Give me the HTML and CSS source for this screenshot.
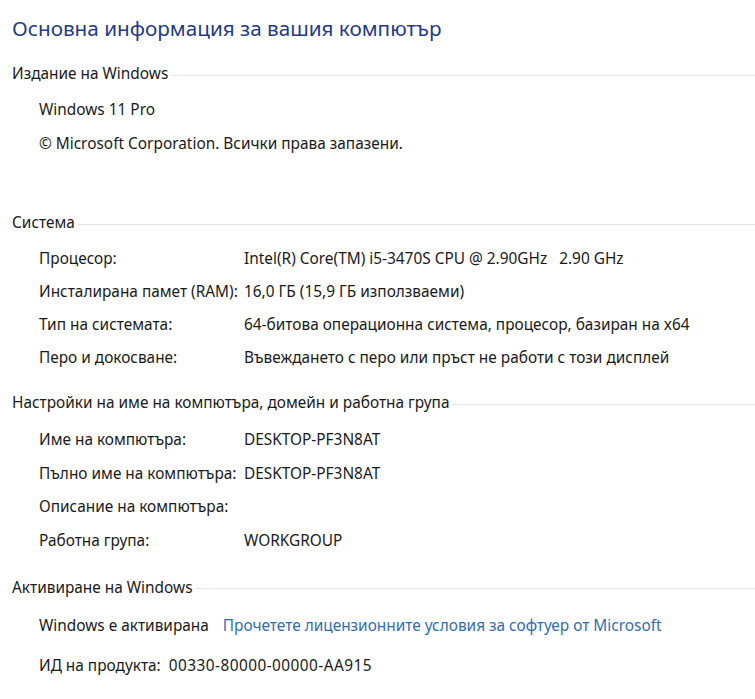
FILE: index.html
```html
<!DOCTYPE html>
<html lang="bg">
<head>
  <meta charset="UTF-8" />
  <title>Система</title>
  <link rel="stylesheet" href="styles.css">
</head>
<body>
  <div class="page">
    <h1 class="title">Основна информация за вашия компютър</h1>

    <!-- Edition -->
    <div class="section edition">
      <div class="section-head"><span>Издание на Windows</span><div class="rule"></div></div>
      <div class="line">Windows 11 Pro</div>
      <div class="line">© Microsoft Corporation. Всички права запазени.</div>
    </div>

    <!-- System -->
    <div class="section system">
      <div class="section-head"><span>Система</span><div class="rule"></div></div>
      <div class="rows">
        <div class="label">Процесор:</div><div class="value">Intel(R) Core(TM) i5-3470S CPU @ 2.90GHz &nbsp; 2.90 GHz</div>
        <div class="label">Инсталирана памет (RAM):</div><div class="value">16,0 ГБ (15,9 ГБ използваеми)</div>
        <div class="label">Тип на системата:</div><div class="value">64-битова операционна система, процесор, базиран на x64</div>
        <div class="label">Перо и докосване:</div><div class="value">Въвеждането с перо или пръст не работи с този дисплей</div>
      </div>
    </div>

    <!-- Computer name -->
    <div class="section names">
      <div class="section-head"><span>Настройки на име на компютъра, домейн и работна група</span><div class="rule"></div></div>
      <div class="rows">
        <div class="label">Име на компютъра:</div><div class="value">DESKTOP-PF3N8AT</div>
        <div class="label">Пълно име на компютъра:</div><div class="value">DESKTOP-PF3N8AT</div>
        <div class="label">Описание на компютъра:</div><div class="value"></div>
        <div class="label">Работна група:</div><div class="value">WORKGROUP</div>
      </div>
    </div>

    <!-- Activation -->
    <div class="section activation">
      <div class="section-head"><span>Активиране на Windows</span><div class="rule"></div></div>
      <div class="line">Windows е активирана <a href="#" class="link">Прочетете лицензионните условия за софтуер от Microsoft</a></div>
      <div class="line product">ИД на продукта: &nbsp;<span class="pid">00330-80000-00000-AA915</span></div>
    </div>
  </div>
</body>
</html>
```

FILE: styles.css
```css
* { box-sizing: border-box; margin: 0; padding: 0; }
body {
  background: #fff;
  font-family: "Noto Sans", "Open Sans", sans-serif;
  font-size: 15.4px;
  color: #1a1a1a;
  overflow: hidden;
}
.page { padding: 12px 0 0 12px; }

.title {
  font-size: 20.7px; font-weight: normal;
  color: #1f3a8a;
  line-height: 32px;
}

.section-head {
  display: flex; align-items: center;
  line-height: 24px;
}
.section-head span { white-space: nowrap; }
.rule {
  flex: 1; height: 1px;
  background: #c8c8c8;
  margin-left: 3px;
  margin-top: 2px;
  border-bottom: 1px solid #e6e6e6;
}

.line { padding-left: 27px; line-height: 34px; white-space: nowrap; }

.edition { margin-top: 18px; }
.edition .section-head { margin-bottom: 7px; }
.system { margin-top: 50px; }
.names { margin-top: 17px; }
.activation { margin-top: 18px; }
.activation .section-head { margin-bottom: 9px; }

.rows {
  display: grid;
  grid-template-columns: 205px 1fr;
  padding-left: 27px;
  margin-top: 7px;
  line-height: 33px;
}
.names .rows { line-height: 33.7px; margin-top: 8px; }
.value { white-space: nowrap; }

.activation .product { margin-top: 6px; }
.pid { letter-spacing: 0.45px; }
.link { color: #2f6db3; text-decoration: none; margin-left: 10px; }
```
